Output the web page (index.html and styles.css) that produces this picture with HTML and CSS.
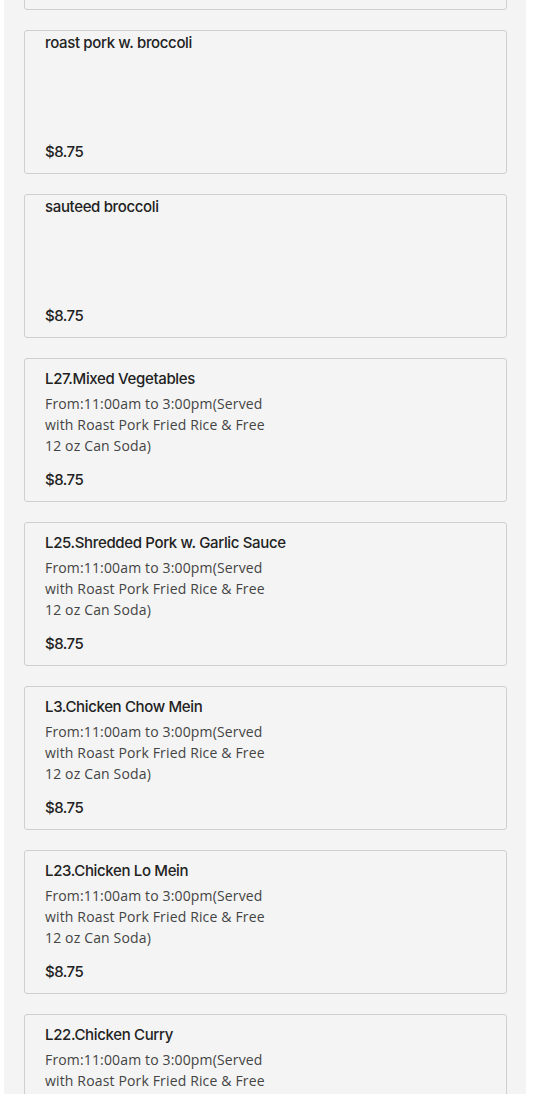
FILE: index.html
```html
<!DOCTYPE html>
<html lang="en">
<head>
    <meta charset="UTF-8">
    <meta name="viewport" content="width=device-width, initial-scale=1.0">
    <title>Lunch Special</title>
    <link rel="stylesheet" href="styles.css">
</head>
<body>

<div class="panel">
    <div class="menu-list">
        <div class="card">
            <div class="item-name">chicken w. broccoli</div>
            <div class="item-price">$8.75</div>
        </div>

        <div class="card">
            <div class="item-name">roast pork w. broccoli</div>
            <div class="item-price">$8.75</div>
        </div>

        <div class="card">
            <div class="item-name">sauteed broccoli</div>
            <div class="item-price">$8.75</div>
        </div>

        <div class="card full">
            <div class="item-name">L27.Mixed Vegetables</div>
            <div class="item-desc">From:11:00am to 3:00pm(Served with Roast Pork Fried Rice &amp; Free 12 oz Can Soda)</div>
            <div class="item-price">$8.75</div>
        </div>

        <div class="card full">
            <div class="item-name">L25.Shredded Pork w. Garlic Sauce</div>
            <div class="item-desc">From:11:00am to 3:00pm(Served with Roast Pork Fried Rice &amp; Free 12 oz Can Soda)</div>
            <div class="item-price">$8.75</div>
        </div>

        <div class="card full">
            <div class="item-name">L3.Chicken Chow Mein</div>
            <div class="item-desc">From:11:00am to 3:00pm(Served with Roast Pork Fried Rice &amp; Free 12 oz Can Soda)</div>
            <div class="item-price">$8.75</div>
        </div>

        <div class="card full">
            <div class="item-name">L23.Chicken Lo Mein</div>
            <div class="item-desc">From:11:00am to 3:00pm(Served with Roast Pork Fried Rice &amp; Free 12 oz Can Soda)</div>
            <div class="item-price">$8.75</div>
        </div>

        <div class="card full">
            <div class="item-name">L22.Chicken Curry</div>
            <div class="item-desc">From:11:00am to 3:00pm(Served with Roast Pork Fried Rice &amp; Free 12 oz Can Soda)</div>
            <div class="item-price">$8.75</div>
        </div>
    </div>
</div>

</body>
</html>
```

FILE: styles.css
```css
body {
    margin: 0;
    padding: 0;
    background-color: #fff;
    font-family: Inter, "Open Sans", sans-serif;
    color: #222;
    overflow: hidden;
}
.panel {
    width: 522px;
    margin-left: 4px;
    padding: 0 19px 0 20px;
    box-sizing: border-box;
    background-color: #f4f4f4;
    min-height: 1094px;
}
.menu-list {
    display: flex;
    flex-direction: column;
    gap: 20px;
    margin-top: -134px;
}
.card {
    height: 144px;
    box-sizing: border-box;
    display: flex;
    flex-direction: column;
    padding: 1px 20px 10px;
    border: 1px solid #cfcfcf;
    border-radius: 3px;
    background-color: #f4f4f4;
}
.card.full {
    padding-top: 9px;
}
.item-name {
    font-size: 15px;
    font-weight: 500;
    line-height: 22px;
    letter-spacing: -0.35px;
}
.item-desc {
    width: 236px;
    margin-top: 3px;
    font-family: "Open Sans", sans-serif;
    font-size: 14px;
    line-height: 21px;
    letter-spacing: 0.15px;
    color: #444;
}
.item-price {
    margin-top: auto;
    font-size: 15px;
    font-weight: 500;
    line-height: 22px;
    letter-spacing: -0.5px;
}
```
